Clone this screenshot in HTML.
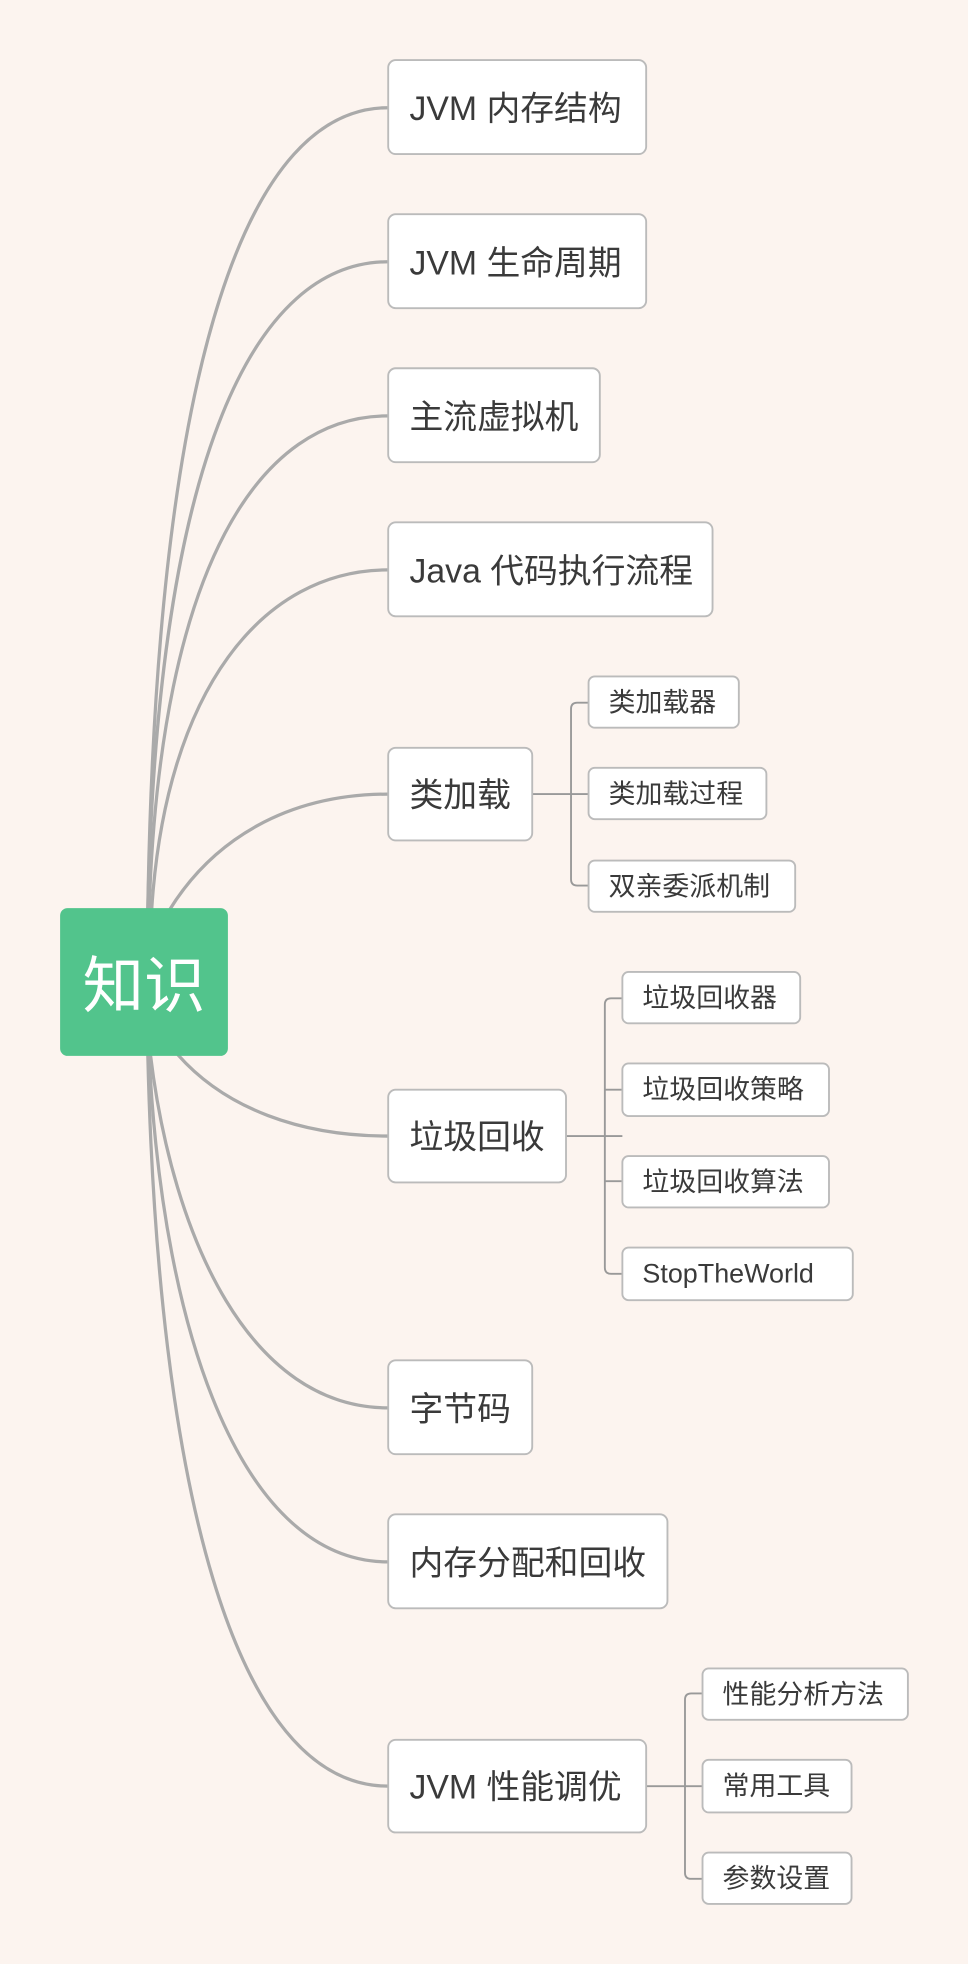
<!DOCTYPE html>
<html><head><meta charset="utf-8"><style>
html,body{margin:0;padding:0;background:#fcf4ef;}
svg{display:block;}
text{font-family:"Liberation Sans","Noto Sans CJK SC",sans-serif;fill:#3a3a3a;}
</style></head><body>
<svg width="968" height="1964" viewBox="0 0 773 1568" preserveAspectRatio="none" xmlns="http://www.w3.org/2000/svg">
<rect width="773" height="1568" fill="#fcf4ef"/>
<g fill="none" stroke="#aaa" stroke-width="2.6">
<path d="M118 728 C125 280,200 86,310 86"/>
<path d="M118 728 C126 360,205 209,310 209"/>
<path d="M119 728 C128 450,208 332,310 332"/>
<path d="M121 728 C132 550,210 455,310 455"/>
<path d="M135 727 C170 670,230 634,310 634"/>
<path d="M142 842 C180 885,240 907,310 907"/>
<path d="M120 841 C138 990,200 1124,310 1124"/>
<path d="M119 841 C130 1070,195 1247,310 1247"/>
<path d="M118 841 C126 1180,185 1426,310 1426"/>
</g>
<g fill="none" stroke="#999" stroke-width="1.5">
<path d="M425 634 H470"/>
<path d="M470 561 H461 Q456 561 456 566 V702 Q456 707 461 707 H470"/>
<path d="M452 907 H497"/>
<path d="M497 797 H488 Q483 797 483 802 V1012 Q483 1017 488 1017 H497"/>
<path d="M483 870 H497 M483 943 H497"/>
<path d="M516 1426 H561"/>
<path d="M561 1352 H552 Q547 1352 547 1357 V1495 Q547 1500 552 1500 H561"/>
</g>
<rect x="48" y="725" width="134" height="118" rx="6" fill="#52c48c"/>
<text x="115" y="804" text-anchor="middle" font-size="49" style="fill:#fff">知识</text>
<g fill="#fff" stroke="#bbb" stroke-width="1.5">
<rect x="310" y="48" width="206" height="75" rx="6"/>
<rect x="310" y="171" width="206" height="75" rx="6"/>
<rect x="310" y="294" width="169" height="75" rx="6"/>
<rect x="310" y="417" width="259" height="75" rx="6"/>
<rect x="310" y="597" width="115" height="74" rx="6"/>
<rect x="310" y="870" width="142" height="74" rx="6"/>
<rect x="310" y="1086" width="115" height="75" rx="6"/>
<rect x="310" y="1209" width="223" height="75" rx="6"/>
<rect x="310" y="1389" width="206" height="74" rx="6"/>
<rect x="470" y="540" width="120" height="41" rx="5"/>
<rect x="470" y="613" width="142" height="41" rx="5"/>
<rect x="470" y="687" width="165" height="41" rx="5"/>
<rect x="497" y="776" width="142" height="41" rx="5"/>
<rect x="497" y="849" width="165" height="42" rx="5"/>
<rect x="497" y="923" width="165" height="41" rx="5"/>
<rect x="497" y="996" width="184" height="42" rx="5"/>
<rect x="561" y="1332" width="164" height="41" rx="5"/>
<rect x="561" y="1405" width="119" height="42" rx="5"/>
<rect x="561" y="1479" width="119" height="41" rx="5"/>
</g>
<g font-size="27">
<text x="327" y="96">JVM 内存结构</text>
<text x="327" y="219">JVM 生命周期</text>
<text x="327" y="342">主流虚拟机</text>
<text x="327" y="465">Java 代码执行流程</text>
<text x="327" y="644">类加载</text>
<text x="327" y="917">垃圾回收</text>
<text x="327" y="1134">字节码</text>
<text x="327" y="1257">内存分配和回收</text>
<text x="327" y="1436">JVM 性能调优</text>
</g>
<g font-size="21.5">
<text x="486" y="568">类加载器</text>
<text x="486" y="641">类加载过程</text>
<text x="486" y="715">双亲委派机制</text>
<text x="513" y="804">垃圾回收器</text>
<text x="513" y="877">垃圾回收策略</text>
<text x="513" y="951">垃圾回收算法</text>
<text x="513" y="1024">StopTheWorld</text>
<text x="577" y="1360">性能分析方法</text>
<text x="577" y="1433">常用工具</text>
<text x="577" y="1507">参数设置</text>
</g>
</svg>
</body></html>
